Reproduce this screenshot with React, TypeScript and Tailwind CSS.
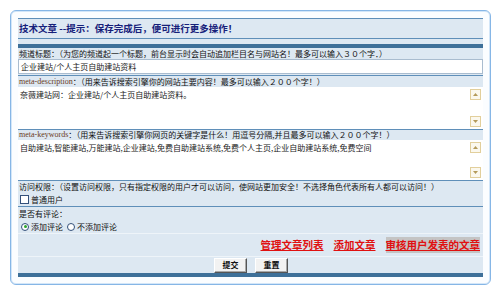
import React from 'react';

const cjk = { fontFamily: '"Noto Sans CJK SC", "Noto Sans", sans-serif' };

// little tan arrow boxes of the old textarea scrollbar
const ScrollBtn = ({ up }: { up?: boolean }) => (
  <div className="w-[11px] h-[11px] border border-[#e2cf9c] bg-[#fbf8ee] flex items-center justify-center">
    <svg width="5" height="3" viewBox="0 0 5 3">
      {up ? <path d="M0 3 L2.5 0 L5 3 Z" fill="#b49a5a" /> : <path d="M0 0 L2.5 3 L5 0 Z" fill="#b49a5a" />}
    </svg>
  </div>
);

const TextBox = ({ text, h }: { text: string; h: string }) => (
  <div className={`flex bg-white ${h}`}>
    <div className="flex-1 pl-[2px] pt-[2px] text-[8px] leading-[11px] text-[#222]">{text}</div>
    <div className="w-[13px] flex flex-col justify-between py-[2px]">
      <ScrollBtn up />
      <ScrollBtn />
    </div>
  </div>
);

const Label = ({ children, h = 'h-[11px]' }: { children: React.ReactNode; h?: string }) => (
  <div className={`flex items-center pl-[1px] text-[8px] text-[#111] whitespace-nowrap ${h}`}>{children}</div>
);

const App: React.FC = () => {
  return (
    <div className="w-[500px] h-[296px] bg-white pl-[10px] pt-[10px]" style={cjk}>
      <div className="w-[481px] h-[275px] rounded-[6px] border border-[#86b6e6] shadow-[inset_0_0_0_1px_#d3e6f8] bg-[#fbfdff] px-[7px] pt-[7px]">
        <div className="w-[465px] bg-[#dde8f2]">
          {/* header */}
          <div className="h-[21px] border-y border-[#5f8fb9] flex items-center pl-[1px] text-[9.5px] font-bold text-[#16207a]">
            技术文章 --提示：保存完成后，便可进行更多操作！
          </div>
          <div className="h-[5px]" />
          <div className="h-[4px] bg-[#3e7099]" />

          <Label>频道标题：（为您的频道起一个标题，前台显示时会自动追加栏目名与网站名！最多可以输入３０个字．）</Label>
          <div className="h-[15px] bg-white border border-[#a9bccf] flex items-center pl-[2px] text-[8px] text-[#222]">
            企业建站/个人主页自助建站资料
          </div>
          <div className="h-[1px] bg-[#5f8fb9] mt-[1px]" />

          <Label>
            <span className="text-[#6b3b22]" style={{ fontFamily: '"Liberation Serif", serif' }}>meta-description</span>
            ：（用来告诉搜索引擎你的网站主要内容！最多可以输入２００个字！）
          </Label>
          <TextBox h="h-[42px]" text="奈薇建站网：企业建站/个人主页自助建站资料。" />
          <div className="h-[1px] bg-[#5f8fb9]" />

          <Label h="h-[10px]">
            <span className="text-[#6b3b22]" style={{ fontFamily: '"Liberation Serif", serif' }}>meta-keywords</span>
            ：（用来告诉搜索引擎你网页的关键字是什么！用逗号分隔,并且最多可以输入２００个字！）
          </Label>
          <TextBox h="h-[40px]" text="自助建站,智能建站,万能建站,企业建站,免费自助建站系统,免费个人主页,企业自助建站系统,免费空间" />
          <div className="h-[1px] bg-[#5f8fb9]" />

          <Label h="h-[12px]">访问权限：（设置访问权限，只有指定权限的用户才可以访问，使网站更加安全！不选择角色代表所有人都可以访问！）</Label>
          <div className="h-[13px] flex items-center pl-[2px] gap-[2px] text-[8px] text-[#111]">
            <span className="w-[9px] h-[9px] border border-[#33507a] bg-white" />
            普通用户
          </div>
          <div className="h-[1px] bg-[#5f8fb9]" />

          <Label h="h-[13px]">是否有评论：</Label>
          <div className="h-[13px] flex items-center pl-[3px] text-[8px] text-[#111]">
            <span className="w-[8px] h-[8px] rounded-full border border-[#33507a] bg-white flex items-center justify-center">
              <span className="w-[3px] h-[3px] rounded-full bg-[#2aa52a]" />
            </span>
            <span className="ml-[2px]">添加评论</span>
            <span className="ml-[4px] w-[8px] h-[8px] rounded-full border border-[#33507a] bg-white" />
            <span className="ml-[2px]">不添加评论</span>
          </div>
          <div className="h-[1px] bg-[#eef4f9]" />

          <div className="h-[22px] flex items-center justify-end pr-[3px] gap-[10px] text-[10.5px] font-bold text-[#e01010] underline">
            <span>管理文章列表</span>
            <span>添加文章</span>
            <span className="bg-[#c4c4c4]">审核用户发表的文章</span>
          </div>
          <div className="h-[1px] bg-[#eef4f9]" />

          <div className="h-[16px] flex items-center justify-center gap-[8px] pl-[1px]">
            <button className="w-[33px] h-[15px] bg-[#f2f2f2] border border-t-white border-l-white border-r-[#555] border-b-[#555] shadow-[inset_-1px_-1px_0_#a8a8a8] text-[8px] font-bold text-[#111]">
              提交
            </button>
            <button className="w-[33px] h-[15px] bg-[#f2f2f2] border border-t-white border-l-white border-r-[#555] border-b-[#555] shadow-[inset_-1px_-1px_0_#a8a8a8] text-[8px] font-bold text-[#111]">
              重置
            </button>
          </div>
          <div className="h-[4px] bg-[#3e7099]" />
        </div>
      </div>
    </div>
  );
};

export default App;
